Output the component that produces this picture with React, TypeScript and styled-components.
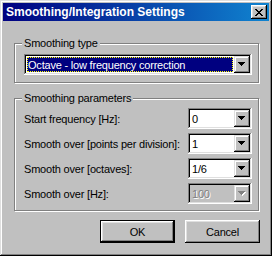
import React from 'react'
import styled, { createGlobalStyle } from 'styled-components'

const Global = createGlobalStyle`
  html, body {
    margin: 0;
    padding: 0;
    background: #c0c0c0;
  }
  * {
    box-sizing: border-box;
  }
`

const Window = styled.div`
  width: 272px;
  height: 256px;
  padding: 3px;
  background: #c0c0c0;
  font-family: 'Liberation Sans', Arial, sans-serif;
  font-size: 11px;
  letter-spacing: -0.2px;
  color: #000;
  box-shadow: inset -1px -1px #000, inset 1px 1px #dfdfdf, inset -2px -2px #808080,
    inset 2px 2px #fff;
  display: flex;
  flex-direction: column;
`

const TitleBar = styled.div`
  height: 18px;
  display: flex;
  align-items: center;
  justify-content: space-between;
  padding: 0 2px 0 3px;
  background: linear-gradient(90deg, #000080 0%, #1084d0 100%);
  color: #fff;
  font-weight: bold;
  font-size: 12px;
  letter-spacing: 0;
`

const CloseButton = styled.div`
  width: 16px;
  height: 14px;
  background: #c0c0c0;
  display: flex;
  align-items: center;
  justify-content: center;
  box-shadow: inset -1px -1px #000, inset 1px 1px #fff, inset -2px -2px #808080,
    inset 2px 2px #dfdfdf;
`

const Body = styled.div`
  padding: 22px 0 0 11px;
  display: flex;
  flex-direction: column;
`

const Group = styled.div<{ $gap?: number; $top?: number; $bottom?: number }>`
  position: relative;
  width: 245px;
  border: 1px solid #808080;
  box-shadow: inset 1px 1px #fff, 1px 1px #fff;
  padding: ${(p) => p.$top ?? 10}px 6px ${(p) => p.$bottom ?? 7}px 9px;
  display: flex;
  flex-direction: column;
  gap: ${(p) => p.$gap ?? 0}px;
  & + & {
    margin-top: 15px;
  }
`

const Legend = styled.span`
  position: absolute;
  top: -8px;
  left: 7px;
  padding: 0 2px;
  background: #c0c0c0;
  line-height: 14px;
`

const Row = styled.div`
  display: flex;
  align-items: center;
  justify-content: space-between;
`

const Combo = styled.div<{ $width: number; $disabled?: boolean }>`
  width: ${(p) => p.$width}px;
  flex-shrink: 0;
  height: 21px;
  padding: 2px;
  display: flex;
  background: ${(p) => (p.$disabled ? '#c0c0c0' : '#fff')};
  box-shadow: inset -1px -1px #fff, inset 1px 1px #808080, inset -2px -2px #dfdfdf,
    inset 2px 2px #000;
`

const ComboText = styled.div<{ $selected?: boolean; $disabled?: boolean }>`
  flex: 1;
  display: flex;
  align-items: center;
  margin: ${(p) => (p.$selected ? '1px' : '0')};
  padding-left: ${(p) => (p.$selected ? '1px' : '2px')};
  background: ${(p) => (p.$selected ? '#000080' : 'transparent')};
  color: ${(p) => (p.$selected ? '#fff' : p.$disabled ? '#808080' : '#000')};
  text-shadow: ${(p) => (p.$disabled ? '1px 1px #fff' : 'none')};
  outline: ${(p) => (p.$selected ? '1px dotted #ffff00' : 'none')};
  outline-offset: -1px;
  white-space: nowrap;
  overflow: hidden;
`

const DropButton = styled.div`
  width: 16px;
  height: 17px;
  background: #c0c0c0;
  display: flex;
  align-items: center;
  justify-content: center;
  box-shadow: inset -1px -1px #000, inset 1px 1px #dfdfdf, inset -2px -2px #808080,
    inset 2px 2px #fff;
`

const Label = styled.span`
  white-space: nowrap;
`

const Buttons = styled.div`
  margin-top: 9px;
  display: flex;
  justify-content: flex-end;
  gap: 10px;
  width: 246px;
`

const Button = styled.div<{ $default?: boolean }>`
  width: 75px;
  height: 23px;
  display: flex;
  align-items: center;
  justify-content: center;
  background: #c0c0c0;
  box-shadow: ${(p) =>
    p.$default
      ? 'inset -1px -1px #000, inset 1px 1px #000, inset -2px -2px #000, inset 2px 2px #fff, inset -3px -3px #808080, inset 3px 3px #dfdfdf'
      : 'inset -1px -1px #000, inset 1px 1px #fff, inset -2px -2px #808080, inset 2px 2px #dfdfdf'};
`

function Arrow({ disabled }: { disabled?: boolean }) {
  return (
    <svg width="8" height="5" viewBox="0 0 8 5" shapeRendering="crispEdges">
      {disabled && <polygon points="1,1 8,1 4.5,5" fill="#fff" />}
      <polygon points="0,0 7,0 3.5,4" fill={disabled ? '#808080' : '#000'} />
    </svg>
  )
}

function ComboBox(props: { value: string; width: number; selected?: boolean; disabled?: boolean }) {
  return (
    <Combo $width={props.width} $disabled={props.disabled}>
      <ComboText $selected={props.selected} $disabled={props.disabled}>
        {props.value}
      </ComboText>
      <DropButton>
        <Arrow disabled={props.disabled} />
      </DropButton>
    </Combo>
  )
}

const params = [
  { label: 'Start frequency [Hz]:', value: '0' },
  { label: 'Smooth over [points per division]:', value: '1' },
  { label: 'Smooth over [octaves]:', value: '1/6' },
  { label: 'Smooth over [Hz]:', value: '100', disabled: true },
]

export default function App() {
  return (
    <>
      <Global />
      <Window>
        <TitleBar>
          <span>Smoothing/Integration Settings</span>
          <CloseButton>
            <svg width="8" height="7" viewBox="0 0 8 7" shapeRendering="crispEdges">
              <path
                d="M0 0h2v1h-2zM6 0h2v1h-2zM1 1h2v1h-2zM5 1h2v1h-2zM2 2h4v1h-4zM3 3h2v1h-2zM2 4h4v1h-4zM1 5h2v1h-2zM5 5h2v1h-2zM0 6h2v1h-2zM6 6h2v1h-2z"
                fill="#000"
              />
            </svg>
          </CloseButton>
        </TitleBar>
        <Body>
          <Group>
            <Legend>Smoothing type</Legend>
            <ComboBox value="Octave - low frequency correction" width={228} selected />
          </Group>
          <Group $gap={4} $top={9} $bottom={6}>
            <Legend>Smoothing parameters</Legend>
            {params.map((p) => (
              <Row key={p.label}>
                <Label>{p.label}</Label>
                <ComboBox value={p.value} width={64} disabled={p.disabled} />
              </Row>
            ))}
          </Group>
          <Buttons>
            <Button $default>OK</Button>
            <Button>Cancel</Button>
          </Buttons>
        </Body>
      </Window>
    </>
  )
}
